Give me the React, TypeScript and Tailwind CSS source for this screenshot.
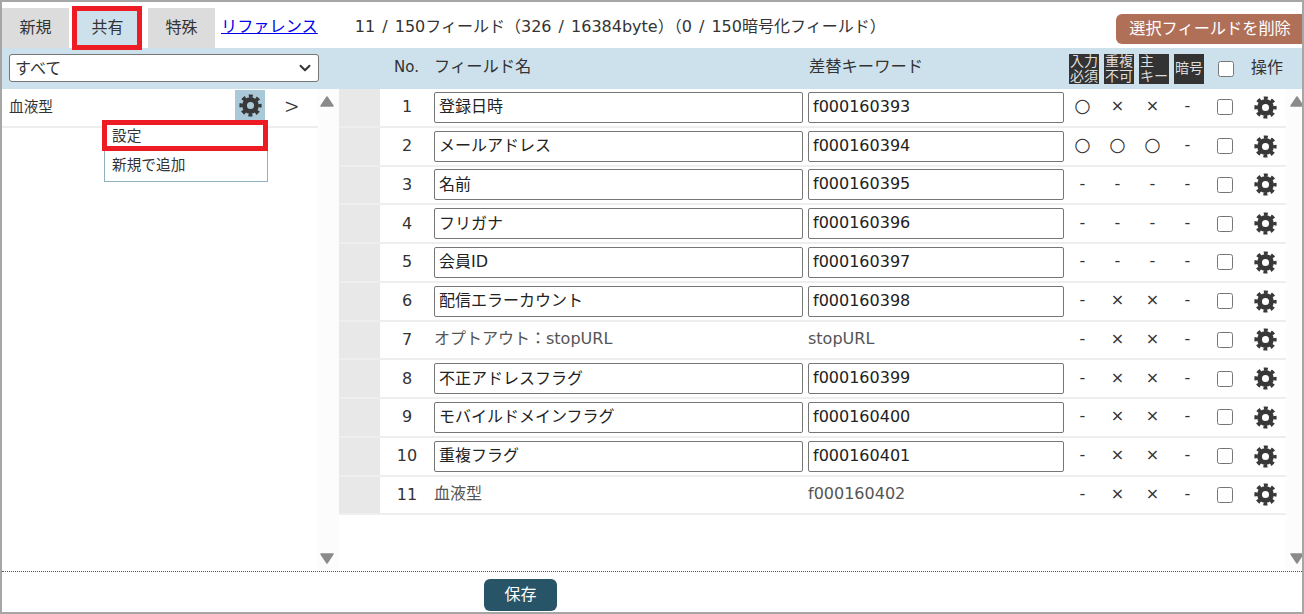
import { ChevronDown } from "lucide-react";

const rows = [
  { no: 1, name: "登録日時", key: "f000160393", marks: ["○", "×", "×", "-"], input: true },
  { no: 2, name: "メールアドレス", key: "f000160394", marks: ["○", "○", "○", "-"], input: true },
  { no: 3, name: "名前", key: "f000160395", marks: ["-", "-", "-", "-"], input: true },
  { no: 4, name: "フリガナ", key: "f000160396", marks: ["-", "-", "-", "-"], input: true },
  { no: 5, name: "会員ID", key: "f000160397", marks: ["-", "-", "-", "-"], input: true },
  { no: 6, name: "配信エラーカウント", key: "f000160398", marks: ["-", "×", "×", "-"], input: true },
  { no: 7, name: "オプトアウト：stopURL", key: "stopURL", marks: ["-", "×", "×", "-"], input: false },
  { no: 8, name: "不正アドレスフラグ", key: "f000160399", marks: ["-", "×", "×", "-"], input: true },
  { no: 9, name: "モバイルドメインフラグ", key: "f000160400", marks: ["-", "×", "×", "-"], input: true },
  { no: 10, name: "重複フラグ", key: "f000160401", marks: ["-", "×", "×", "-"], input: true },
  { no: 11, name: "血液型", key: "f000160402", marks: ["-", "×", "×", "-"], input: false },
];

const Triangle = ({ down }: { down?: boolean }) => (
  <svg width="14" height="11" viewBox="0 0 14 11" className={down ? "rotate-180" : ""}>
    <path d="M7 1 L13 10 L1 10 Z" fill="#8a8a8a" stroke="#8a8a8a" strokeWidth="1.5" strokeLinejoin="round" />
  </svg>
);

const Scrollbar = ({ className }: { className: string }) => (
  <div className={`flex flex-col items-center justify-between bg-[#fcfcfc] pt-[7px] pb-[7px] ${className}`}>
    <Triangle />
    <Triangle down />
  </div>
);

// 8-tooth cog
const Gear = ({ className = "" }: { className?: string }) => (
  <svg width="23" height="23" viewBox="0 0 24 24" className={`shrink-0 ${className}`}>
    <circle cx="12" cy="12" r="6.2" fill="none" stroke="#383838" strokeWidth="5" />
    <circle
      cx="12"
      cy="12"
      r="9.8"
      fill="none"
      stroke="#383838"
      strokeWidth="3.6"
      strokeDasharray="4.1 3.6"
      strokeDashoffset="2.05"
    />
  </svg>
);

const Badge = ({ lines, start }: { lines: string[]; start?: boolean }) => (
  <div
    className={`w-[30px] h-[30px] bg-[#333333] text-[#dddddd] text-[14px] leading-[15px] flex flex-col justify-center shrink-0 overflow-hidden ${
      start ? "items-start pl-[1px]" : "items-center"
    }`}
  >
    {lines.map((l) => (
      <span key={l}>{l}</span>
    ))}
  </div>
);

const Mark = ({ value }: { value: string }) => (
  <span className={`w-[35px] h-[20px] text-center text-[#333333] ${value === "○" ? "text-[19px] leading-[18px]" : "text-[16px] leading-[20px]"}`}>
    {value}
  </span>
);

export default function App() {
  return (
    <div
      className="w-[1304px] h-[614px] overflow-hidden border-2 border-[#a6a6a6] bg-white flex flex-col text-[#333333] text-[16px]"
      style={{ fontFamily: '"DejaVu Sans", "Noto Sans CJK JP", sans-serif' }}
    >
      {/* Tabs */}
      <div className="h-[46px] flex items-end shrink-0 relative">
        <div className="w-[67px] h-[40px] bg-[#dcdcdc] flex items-center justify-center">新規</div>
        <div className="relative w-[60px] h-[40px] ml-[8px] pl-[1px] bg-[#cde1ec] flex items-center justify-center">
          共有
          <div className="absolute left-[-5px] right-[-5px] top-[-2px] bottom-[-2px] border-[5px] border-[#ed1c24]" />
        </div>
        <div className="w-[67px] h-[40px] ml-[11px] bg-[#dcdcdc] flex items-center justify-center">特殊</div>
        <div className="flex-1 h-[40px] flex items-start">
          <a href="#" className="ml-[6px] text-[#0000ee] underline leading-[38px] text-[16.2px]">リファレンス</a>
          <span className="ml-[37px] leading-[38px] text-[16px] whitespace-nowrap [word-spacing:2px]">
            11 / 150フィールド（326 / 16384byte）（0 / 150暗号化フィールド）
          </span>
        </div>
        <button className="absolute right-0 top-[12px] w-[186px] h-[30px] bg-[#b07058] text-white rounded-l-md text-[16.2px] pl-[2px]">
          選択フィールドを削除
        </button>
      </div>

      {/* Table header */}
      <div className="h-[41px] bg-[#cde1ec] flex items-center shrink-0 text-[16.3px]">
        <div className="w-[378px] pl-[7px] shrink-0">
          <div className="relative w-[310px] h-[28px] mb-[2px]">
            <select className="appearance-none w-full h-full bg-white border border-[#767676] rounded-[3px] pl-[5px] pt-[2px] text-[16px]">
              <option>すべて</option>
            </select>
            <ChevronDown className="absolute right-[5px] top-[5px] w-[18px] h-[18px] text-[#333333]" strokeWidth={2.6} />
          </div>
        </div>
        <span className="w-[54px] pl-[14px] text-[15px] mb-[2px]">No.</span>
        <span className="w-[375px] mb-[2px]">フィールド名</span>
        <span className="w-[260px] mb-[2px]">差替キーワード</span>
        <div className="flex gap-[5px]">
          <Badge lines={["入力", "必須"]} />
          <Badge lines={["重複", "不可"]} />
          <Badge lines={["主", "キー"]} start />
          <Badge lines={["暗号"]} />
        </div>
        <input type="checkbox" className="ml-[14px] w-4 h-4" />
        <span className="ml-[17px] mb-[2px] text-[16px]">操作</span>
      </div>

      {/* Body */}
      <div className="flex-1 flex min-h-0">
        <div className="w-[316px] shrink-0 relative">
          <div className="h-[39px] border-b-2 border-[#eeeeee] flex items-center pl-[7px] text-[14.67px]">
            <span className="w-[226px] mb-[2px]">血液型</span>
            <div className="w-[30px] h-[30px] bg-[#a9c9d9] flex items-center justify-center mb-[5px]">
              <Gear />
            </div>
            <span
              className="ml-[20px] text-[25px] leading-none mb-[5px] font-light"
              style={{ fontFamily: '"Noto Sans CJK JP", sans-serif' }}
            >
              &gt;
            </span>
          </div>
          {/* Menu */}
          <div className="absolute left-[102px] top-[32px] w-[164px] bg-white border border-[#8fb0c0] text-[14.67px]">
            <div className="h-[30px] pl-[7px] pb-[3px] flex items-center">設定</div>
            <div className="h-[29px] pl-[7px] pb-[3px] flex items-center">新規で追加</div>
          </div>
          <div className="absolute left-[100px] top-[31px] w-[166px] h-[31px] border-[5px] border-[#ed1c24]" />
        </div>
        <Scrollbar className="w-[21px] shrink-0 pr-[4px]" />

        <div className="w-[947px] shrink-0">
          {rows.map((r) => (
            <div key={r.no} className="h-[38.75px] flex items-center border-b-2 border-[#eeeeee]">
              <div className="w-[41px] self-stretch bg-[#e8e8e8]" />
              <span className="w-[54px] text-center text-[16px]">{r.no}</span>
              {r.input ? (
                <>
                  <input
                    readOnly
                    value={r.name}
                    className="w-[369px] h-[31px] border border-[#767676] rounded-[2px] px-[4px] pb-[4px] text-[#222222]"
                  />
                  <input
                    readOnly
                    value={r.key}
                    className="ml-[5px] w-[256px] h-[31px] border border-[#767676] rounded-[2px] px-[4px] pb-[2px] text-[#222222]"
                  />
                </>
              ) : (
                <>
                  <span className="w-[374px] text-[#555555] whitespace-nowrap mb-[2px]">{r.name}</span>
                  <span className="w-[256px] text-[#555555] mb-[2px]">{r.key}</span>
                </>
              )}
              <div className="flex ml-[1px] mb-[2px]">
                {r.marks.map((m, i) => (
                  <Mark key={i} value={m} />
                ))}
              </div>
              <input type="checkbox" className="ml-[12px] w-4 h-4" />
              <Gear className="ml-[21px]" />
            </div>
          ))}
        </div>
        <Scrollbar className="flex-1 pl-[4px]" />
      </div>

      {/* Footer */}
      <div className="h-[41px] border-t border-dotted border-[#555555] shrink-0 pl-[482px] pt-[7px]">
        <button className="w-[73px] h-[32px] bg-[#285468] text-white rounded-md">保存</button>
      </div>
    </div>
  );
}
